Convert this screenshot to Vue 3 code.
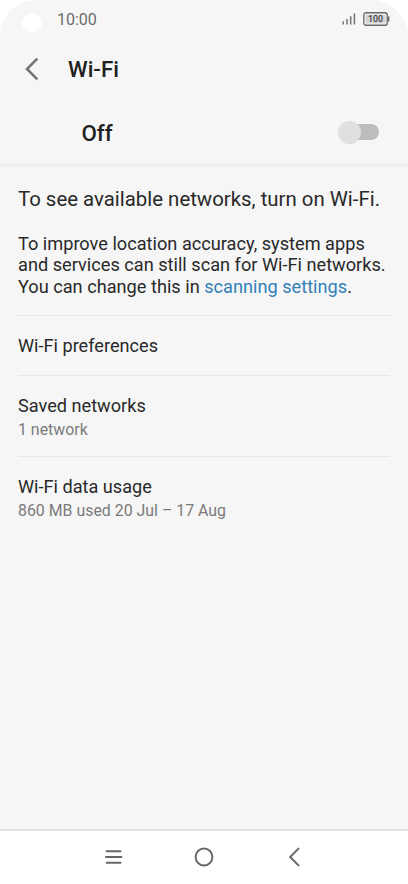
<script setup>
const items = [
  { title: 'Wi-Fi preferences', kind: 'single' },
  { title: 'Saved networks', note: '1 network', kind: 'saved' },
  { title: 'Wi-Fi data usage', note: '860 MB used 20 Jul – 17 Aug', kind: 'usage' },
]
</script>

<template>
  <div class="phone">
    <main class="screen">
      <div class="status">
        <span class="camera"></span>
        <span class="time">10:00</span>
        <svg class="signal" width="14" height="12" viewBox="0 0 14 12">
          <path d="M1.2 8.2V11.5M5 6V11.5M8.7 3.2V11.5M12.4 .5V11.5" stroke="#727272" stroke-width="1.5" />
        </svg>
        <span class="battery">
          <svg width="27" height="14" viewBox="0 0 27 14">
            <rect x=".75" y=".75" width="23.5" height="12.5" rx="2.2" fill="none" stroke="#686868" stroke-width="1.3" />
            <rect x="2.5" y="2.5" width="20" height="9" fill="#d3d3d3" />
            <path d="M25.6 4.5V9.5" stroke="#686868" stroke-width="1.6" />
            <text x="12.6" y="10.3" text-anchor="middle" textLength="15" lengthAdjust="spacingAndGlyphs">100</text>
          </svg>
        </span>
      </div>
      <header class="head">
        <svg class="back" width="14" height="24" viewBox="0 0 14 24">
          <path d="M12.3 1.7L2 12L12.3 22.3" fill="none" stroke="#757575" stroke-width="2.6" />
        </svg>
        <h1>Wi-Fi</h1>
      </header>
      <div class="power">
        <span class="state">Off</span>
        <span class="switch"><span class="track"></span><span class="knob"></span></span>
      </div>
      <section class="info">
        <p class="lead">To see available networks, turn on Wi-Fi.</p>
        <p class="body">
          To improve location accuracy, system apps<br />
          and services can still scan for Wi-Fi networks.<br />
          You can change this in <a>scanning settings</a>.
        </p>
      </section>
      <ul class="list">
        <li v-for="i in items" :key="i.title" :class="i.kind">
          <div class="title">{{ i.title }}</div>
          <div v-if="i.note" class="note">{{ i.note }}</div>
        </li>
      </ul>
    </main>
    <nav class="nav">
      <svg width="18" height="16" viewBox="0 0 18 16">
        <path d="M1.6 2.2H15.5M.9 8H16.4M1.6 13.7H15.5" stroke="#686868" stroke-width="2" stroke-linecap="round" />
      </svg>
      <svg width="20" height="20" viewBox="0 0 20 20">
        <circle cx="10" cy="10" r="8.4" fill="none" stroke="#686868" stroke-width="2" />
      </svg>
      <svg width="12" height="20" viewBox="0 0 12 20">
        <path d="M9.5 1.6L1.2 10L9.5 18.4" fill="none" stroke="#686868" stroke-width="2" stroke-linecap="round" stroke-linejoin="round" />
      </svg>
    </nav>
  </div>
</template>

<style>
body { background: #fff; overflow: hidden; }
</style>

<style scoped>
* { box-sizing: border-box; }
.phone { width: 408px; height: 884px; display: flex; flex-direction: column; background: #fff; font-family: Roboto, sans-serif; color: #292929; }
.screen { height: 831px; background: #f6f6f6; border-radius: 36px 38px 0 0; border-bottom: 2px solid #e2e2e2; }
.status { height: 38px; display: flex; align-items: center; padding: 0 18.5px 0 21.5px; }
.camera { width: 20px; height: 20px; border-radius: 50%; background: #fff; margin-top: 8px; }
.time { margin-left: 15.5px; font-size: 16px; color: #6c6c6c; }
.signal { margin-left: auto; }
.battery { width: 27px; height: 14px; margin: -1px 0 0 6.5px; }
.battery svg { display: block; }
.battery text { font-size: 9.5px; font-weight: 500; fill: #444; }
.head { height: 62px; display: flex; align-items: center; padding-left: 25px; }
h1 { margin: 0 0 0 29px; font-size: 22.3px; font-weight: 500; line-height: 26px; color: #202020; }
.power { height: 67px; display: flex; align-items: flex-start; justify-content: space-between; padding: 20px 29.5px 0 81.5px; border-bottom: 3px solid #eee; }
.state { margin-top: -.5px; font-size: 22.3px; line-height: 26px; font-weight: 500; color: #202020; }
.switch { width: 41px; height: 24px; display: grid; align-items: center; }
.track, .knob { grid-area: 1 / 1; }
.track { width: 32px; height: 16px; margin-left: 9px; border-radius: 8px; background: #bdbdbd; }
.knob { width: 23px; height: 23px; border-radius: 50%; background: #e0e0e0; }
.info { padding: 19px 18px 0; height: 148px; white-space: nowrap; }
p { margin: 0; }
.lead { font-size: 20.4px; line-height: 26px; }
.body { margin-top: 20.7px; font-size: 18.18px; line-height: 21.5px; }
a { color: #327fb8; }
.list { list-style: none; margin: 0 18px; padding: 0; }
li { border-top: 1px solid #e6e6e6; padding-top: 18px; }
.single { height: 60px; }
.saved { height: 81px; }
.title { font-size: 18.15px; line-height: 23px; }
.note { margin-top: 1px; font-size: 15.9px; line-height: 23px; color: #7b7b7b; }
.nav { flex: 1; display: grid; grid-template-columns: repeat(3, 90.5px); justify-content: center; justify-items: center; align-items: center; padding-bottom: 2px; }
</style>
